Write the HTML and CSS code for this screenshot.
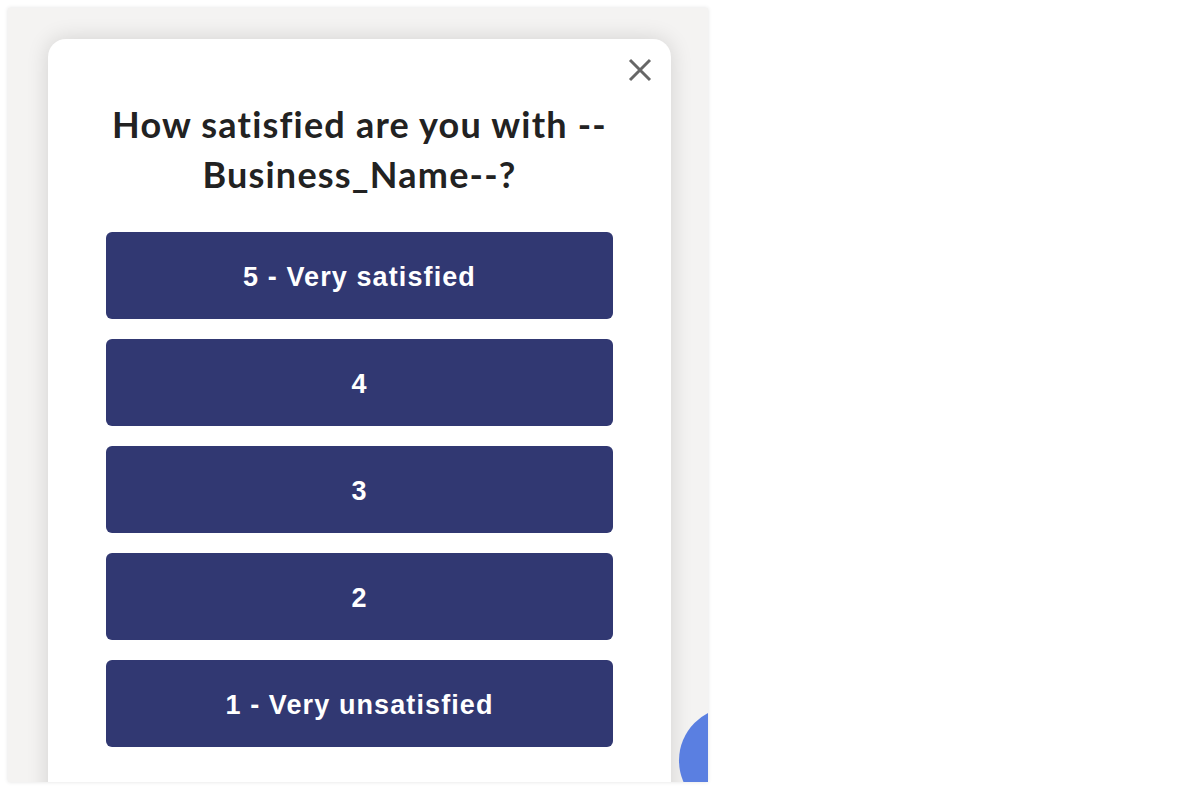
FILE: index.html
```html
<!DOCTYPE html>
<html>
<head>
<meta charset="utf-8">
<link rel="stylesheet" href="styles.css">
</head>
<body>
<div class="frame">
  <div class="card">
    <button class="close" aria-label="Close">
      <svg width="26" height="26" viewBox="0 0 26 26"><path d="M3 3 L23 23 M23 3 L3 23" stroke="#666" stroke-width="3" stroke-linecap="butt" fill="none"/></svg>
    </button>
    <h1 class="title">How satisfied are you with --<br>Business_Name--?</h1>
    <div class="options">
      <button class="opt">5 - Very satisfied</button>
      <button class="opt">4</button>
      <button class="opt">3</button>
      <button class="opt">2</button>
      <button class="opt">1 - Very unsatisfied</button>
    </div>
  </div>
  <div class="bubble"></div>
</div>
</body>
</html>
```
FILE: styles.css
```css
html, body {
  margin: 0;
  padding: 0;
  background: #ffffff;
}
.frame {
  position: relative;
  margin: 8px;
  width: 700px;
  height: 774px;
  box-sizing: border-box;
  padding: 31px 0 0 40px;
  background: #f4f3f2;
  box-shadow: 0 0 4px rgba(0, 0, 0, 0.12);
  overflow: hidden;
}
.card {
  position: relative;
  width: 623px;
  height: 780px;
  box-sizing: border-box;
  background: #ffffff;
  border-radius: 18px;
  box-shadow: 0 0 22px rgba(0, 0, 0, 0.14);
  padding: 60px 58px 0 58px;
}
.close {
  position: absolute;
  top: 18px;
  right: 18px;
  width: 26px;
  height: 26px;
  padding: 0;
  border: 0;
  background: transparent;
  display: flex;
}
.title {
  margin: 0 0 33px 0;
  font-family: Lato, "Noto Sans", sans-serif;
  font-weight: 700;
  font-size: 36px;
  line-height: 50px;
  letter-spacing: 1.2px;
  color: #222222;
  text-align: center;
  white-space: nowrap;
}
.options {
  display: flex;
  flex-direction: column;
  gap: 20px;
}
.opt {
  height: 87px;
  border: 0;
  border-radius: 6px;
  background: #313872;
  color: #ffffff;
  font-family: "Liberation Sans", Arial, sans-serif;
  font-weight: 700;
  font-size: 27px;
  letter-spacing: 1.1px;
  text-align: center;
  padding: 3px 0 0 0;
}
.bubble {
  position: absolute;
  left: 671px;
  top: 699px;
  width: 107px;
  height: 107px;
  border-radius: 50%;
  background: #5a7fe1;
}
```
